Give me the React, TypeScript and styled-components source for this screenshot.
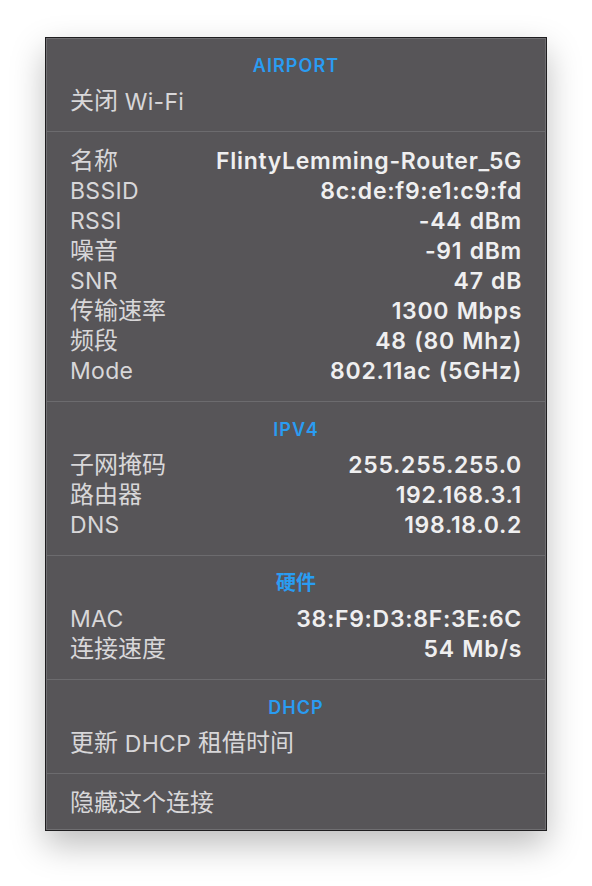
import React from "react";
import styled, { createGlobalStyle } from "styled-components";

const Global = createGlobalStyle`
  html, body { margin: 0; padding: 0; background: #ffffff; }
  body { font-family: "Inter", "Noto Sans CJK SC", sans-serif; }
`;

const Page = styled.div`
  padding: 37px 0 0 45px;
  width: 592px;
  height: 886px;
  box-sizing: border-box;
`;

const Panel = styled.div`
  width: 502px;
  box-sizing: border-box;
  background: #575558;
  border: 1px solid #1f1e20;
  box-shadow: inset 0 0 0 1px #6f6e71, 0 14px 32px rgba(0, 0, 0, 0.26);
  display: flex;
  flex-direction: column;
`;

const Section = styled.div<{ $last?: boolean }>`
  padding: 14px 24px ${(p) => (p.$last ? "12px" : "15px")};
  display: flex;
  flex-direction: column;
`;

const Divider = styled.div`
  height: 1px;
  background: #6c6b6e;
  margin: 0 1px;
`;

const Header = styled.div`
  height: 24px;
  line-height: 27px;
  margin-bottom: 10px;
  text-align: center;
  color: #2a9cf2;
  font-size: 18px;
  font-weight: 600;
  letter-spacing: 1.1px;
`;

const Row = styled.div`
  height: 30px;
  display: flex;
  align-items: center;
  justify-content: space-between;
  font-size: 23px;
  line-height: 30px;
  white-space: nowrap;
`;

const Label = styled.span`
  color: #d8d7d9;
  font-weight: 400;
  letter-spacing: 0.3px;
`;

const Value = styled.span`
  color: #efeff0;
  font-weight: 580;
  letter-spacing: 0.7px;
  word-spacing: 1px;
`;

const Han = styled.span<{ $size: number }>`
  font-size: ${(p) => p.$size}px;
  letter-spacing: 0;
  vertical-align: 0.5px;
`;

const mixed = (text: string, size: number) =>
  text.split(/([\u4e00-\u9fff]+)/).map((part, i) =>
    /[\u4e00-\u9fff]/.test(part) ? (
      <Han key={i} $size={size}>
        {part}
      </Han>
    ) : (
      part
    )
  );

type Item = [string, string?];

const Block: React.FC<{ title?: string; items: Item[]; last?: boolean }> = ({ title, items, last }) => (
  <Section $last={last}>
    {title && <Header>{mixed(title, 20)}</Header>}
    {items.map(([l, v]) => (
      <Row key={l}>
        <Label>{mixed(l, 24)}</Label>
        {v && <Value>{v}</Value>}
      </Row>
    ))}
  </Section>
);

export default function App() {
  return (
    <Page>
      <Global />
      <Panel>
        <Block title="AIRPORT" items={[["关闭 Wi-Fi"]]} />
        <Divider />
        <Block
          items={[
            ["名称", "FlintyLemming-Router_5G"],
            ["BSSID", "8c:de:f9:e1:c9:fd"],
            ["RSSI", "-44 dBm"],
            ["噪音", "-91 dBm"],
            ["SNR", "47 dB"],
            ["传输速率", "1300 Mbps"],
            ["频段", "48 (80 Mhz)"],
            ["Mode", "802.11ac (5GHz)"],
          ]}
        />
        <Divider />
        <Block
          title="IPV4"
          items={[
            ["子网掩码", "255.255.255.0"],
            ["路由器", "192.168.3.1"],
            ["DNS", "198.18.0.2"],
          ]}
        />
        <Divider />
        <Block
          title="硬件"
          items={[
            ["MAC", "38:F9:D3:8F:3E:6C"],
            ["连接速度", "54 Mb/s"],
          ]}
        />
        <Divider />
        <Block title="DHCP" items={[["更新 DHCP 租借时间"]]} />
        <Divider />
        <Block items={[["隐藏这个连接"]]} last />
      </Panel>
    </Page>
  );
}
